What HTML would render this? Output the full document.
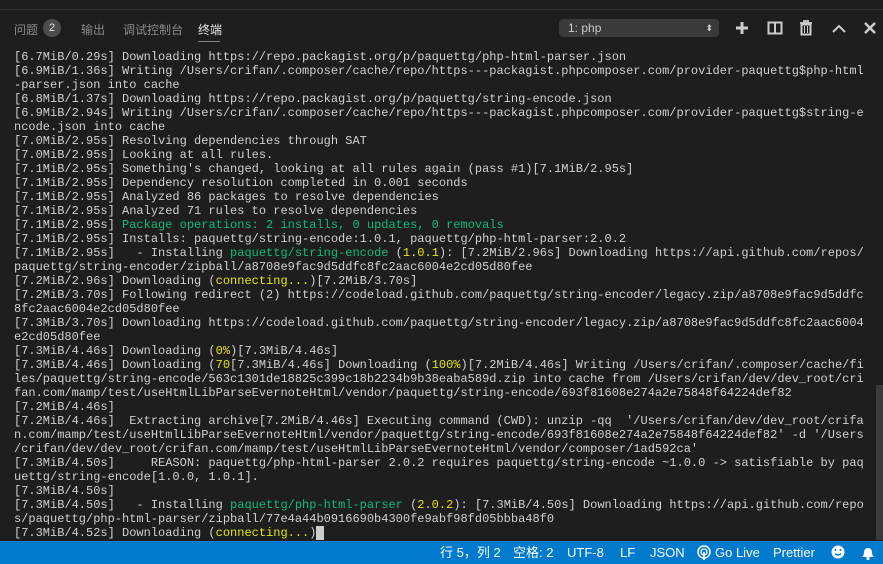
<!DOCTYPE html>
<html><head><meta charset="utf-8"><style>
body{margin:0;width:883px;height:564px;background:#1e1e1e;overflow:hidden;position:relative;font-family:"Liberation Sans","Noto Sans CJK SC",sans-serif}
.top{position:absolute;left:0;top:0;width:883px;height:9px;background:#1e1e1e;border-bottom:1px solid #333}
.tabs{position:absolute;top:14px;left:14px;height:28px;font-size:12px;color:#8a8a8a}
.tabs span{position:absolute;top:7px;white-space:nowrap}
.badge{background:#4d4d4d;color:#ddd;border-radius:9px;width:18px;height:18px;text-align:center;line-height:18px;font-size:11px;top:5px!important}
.act{color:#e7e7e7}
.ul{position:absolute;left:198px;top:41px;width:22px;height:1px;background:#888}
.sel{position:absolute;left:559px;top:19px;width:160px;height:18px;background:#3a3a3a;border-radius:4px;color:#ccc;font-size:12px;line-height:18px;padding-left:9px;box-sizing:border-box}
pre{position:absolute;left:14px;top:50px;margin:0;font-family:"Liberation Mono",monospace;font-size:12px;line-height:14px;color:#d0d0d0}
.g{color:#0dbc79}.y{color:#e5e510}
.cur{background:#ccc;color:#1e1e1e}
.sb{position:absolute;left:0;top:541px;width:883px;height:23px;background:#007acc;color:#fff;font-size:13px;line-height:23px}
.sb span{position:absolute;top:0;white-space:nowrap}
.scr{position:absolute;left:876px;top:385px;width:7px;height:155px;background:#3a3a3a}
</style></head><body>
<div class="top"></div>
<div class="tabs">
<span style="left:0">问题</span><span class="badge" style="left:29px">2</span>
<span style="left:67px">输出</span><span style="left:109px">调试控制台</span><span class="act" style="left:184px">终端</span>
</div>
<div class="ul"></div>
<div class="sel">1: php<span style="position:absolute;right:6px;top:0;font-size:9px">⬍</span></div>
<svg style="position:absolute;left:730px;top:18px" width="150" height="20" viewBox="0 0 150 20">
<path d="M12 4v12M6 10h12" stroke="#ccc" stroke-width="3"/>
<rect x="38.5" y="4.5" width="13" height="11" fill="none" stroke="#ccc" stroke-width="2"/><path d="M45 4v12" stroke="#ccc" stroke-width="2"/>
<path d="M70 5h12M74 5v-2h4v2" stroke="#ccc" stroke-width="1.8" fill="none"/><rect x="71.5" y="6.5" width="9" height="10" fill="none" stroke="#ccc" stroke-width="2"/><path d="M74.5 8v7M77.5 8v7" stroke="#ccc"/>
<path d="M103 14l6-6 6 6" stroke="#ccc" stroke-width="2" fill="none"/>
<path d="M135 5l10 10M145 5l-10 10" stroke="#ccc" stroke-width="2.5"/>
</svg>
<pre>[6.7MiB/0.29s] Downloading https://repo.packagist.org/p/paquettg/php-html-parser.json
[6.9MiB/1.36s] Writing /Users/crifan/.composer/cache/repo/https---packagist.phpcomposer.com/provider-paquettg$php-html
-parser.json into cache
[6.8MiB/1.37s] Downloading https://repo.packagist.org/p/paquettg/string-encode.json
[6.9MiB/2.94s] Writing /Users/crifan/.composer/cache/repo/https---packagist.phpcomposer.com/provider-paquettg$string-e
ncode.json into cache
[7.0MiB/2.95s] Resolving dependencies through SAT
[7.0MiB/2.95s] Looking at all rules.
[7.1MiB/2.95s] Something's changed, looking at all rules again (pass #1)[7.1MiB/2.95s]
[7.1MiB/2.95s] Dependency resolution completed in 0.001 seconds
[7.1MiB/2.95s] Analyzed 86 packages to resolve dependencies
[7.1MiB/2.95s] Analyzed 71 rules to resolve dependencies
[7.1MiB/2.95s] <span class="g">Package operations: 2 installs, 0 updates, 0 removals</span>
[7.1MiB/2.95s] Installs: paquettg/string-encode:1.0.1, paquettg/php-html-parser:2.0.2
[7.1MiB/2.95s]   - Installing <span class="g">paquettg/string-encode</span> (<span class="y">1.0.1</span>): [7.2MiB/2.96s] Downloading https://api.github.com/repos/
paquettg/string-encoder/zipball/a8708e9fac9d5ddfc8fc2aac6004e2cd05d80fee
[7.2MiB/2.96s] Downloading (<span class="y">connecting...</span>)[7.2MiB/3.70s]
[7.2MiB/3.70s] Following redirect (2) https://codeload.github.com/paquettg/string-encoder/legacy.zip/a8708e9fac9d5ddfc
8fc2aac6004e2cd05d80fee
[7.3MiB/3.70s] Downloading https://codeload.github.com/paquettg/string-encoder/legacy.zip/a8708e9fac9d5ddfc8fc2aac6004
e2cd05d80fee
[7.3MiB/4.46s] Downloading (<span class="y">0%</span>)[7.3MiB/4.46s]
[7.3MiB/4.46s] Downloading (<span class="y">70</span>[7.3MiB/4.46s] Downloading (<span class="y">100%</span>)[7.2MiB/4.46s] Writing /Users/crifan/.composer/cache/fi
les/paquettg/string-encode/563c1301de18825c399c18b2234b9b38eaba589d.zip into cache from /Users/crifan/dev/dev_root/cri
fan.com/mamp/test/useHtmlLibParseEvernoteHtml/vendor/paquettg/string-encode/693f81608e274a2e75848f64224def82
[7.2MiB/4.46s]
[7.2MiB/4.46s]  Extracting archive[7.2MiB/4.46s] Executing command (CWD): unzip -qq  '/Users/crifan/dev/dev_root/crifa
n.com/mamp/test/useHtmlLibParseEvernoteHtml/vendor/paquettg/string-encode/693f81608e274a2e75848f64224def82' -d '/Users
/crifan/dev/dev_root/crifan.com/mamp/test/useHtmlLibParseEvernoteHtml/vendor/composer/1ad592ca'
[7.3MiB/4.50s]     REASON: paquettg/php-html-parser 2.0.2 requires paquettg/string-encode ~1.0.0 -> satisfiable by paq
uettg/string-encode[1.0.0, 1.0.1].
[7.3MiB/4.50s]
[7.3MiB/4.50s]   - Installing <span class="g">paquettg/php-html-parser</span> (<span class="y">2.0.2</span>): [7.3MiB/4.50s] Downloading https://api.github.com/repo
s/paquettg/php-html-parser/zipball/77e4a44b0916690b4300fe9abf98fd05bbba48f0
[7.3MiB/4.52s] Downloading (<span class="y">connecting...</span>)<span class="cur"> </span></pre>
<div class="scr"></div>
<div class="sb">
<span style="left:440px">行 5，列 2</span><span style="left:513px">空格: 2</span><span style="left:567px">UTF-8</span><span style="left:620px">LF</span><span style="left:650px">JSON</span>
<span style="left:715px">Go Live</span><span style="left:773px">Prettier</span>
</div>
<svg style="position:absolute;left:696px;top:544px" width="180" height="18" viewBox="0 0 180 18">
<circle cx="8" cy="8" r="6" fill="none" stroke="#fff" stroke-width="1.5"/><circle cx="8" cy="8" r="3" fill="none" stroke="#fff" stroke-width="1.3"/><path d="M8 8v8" stroke="#fff" stroke-width="1.6"/>
<circle cx="142" cy="8" r="6.5" fill="#fff"/><circle cx="139.5" cy="6" r="1" fill="#007acc"/><circle cx="144.5" cy="6" r="1" fill="#007acc"/><path d="M139 9.5q3 3 6 0" stroke="#007acc" stroke-width="1.3" fill="none"/>
<path d="M166 13q2-1.5 2-5a4 4 0 0 1 8 0q0 3.5 2 5z" fill="#fff"/><circle cx="172" cy="14.5" r="1.6" fill="#fff"/>
</svg>
</body></html>
